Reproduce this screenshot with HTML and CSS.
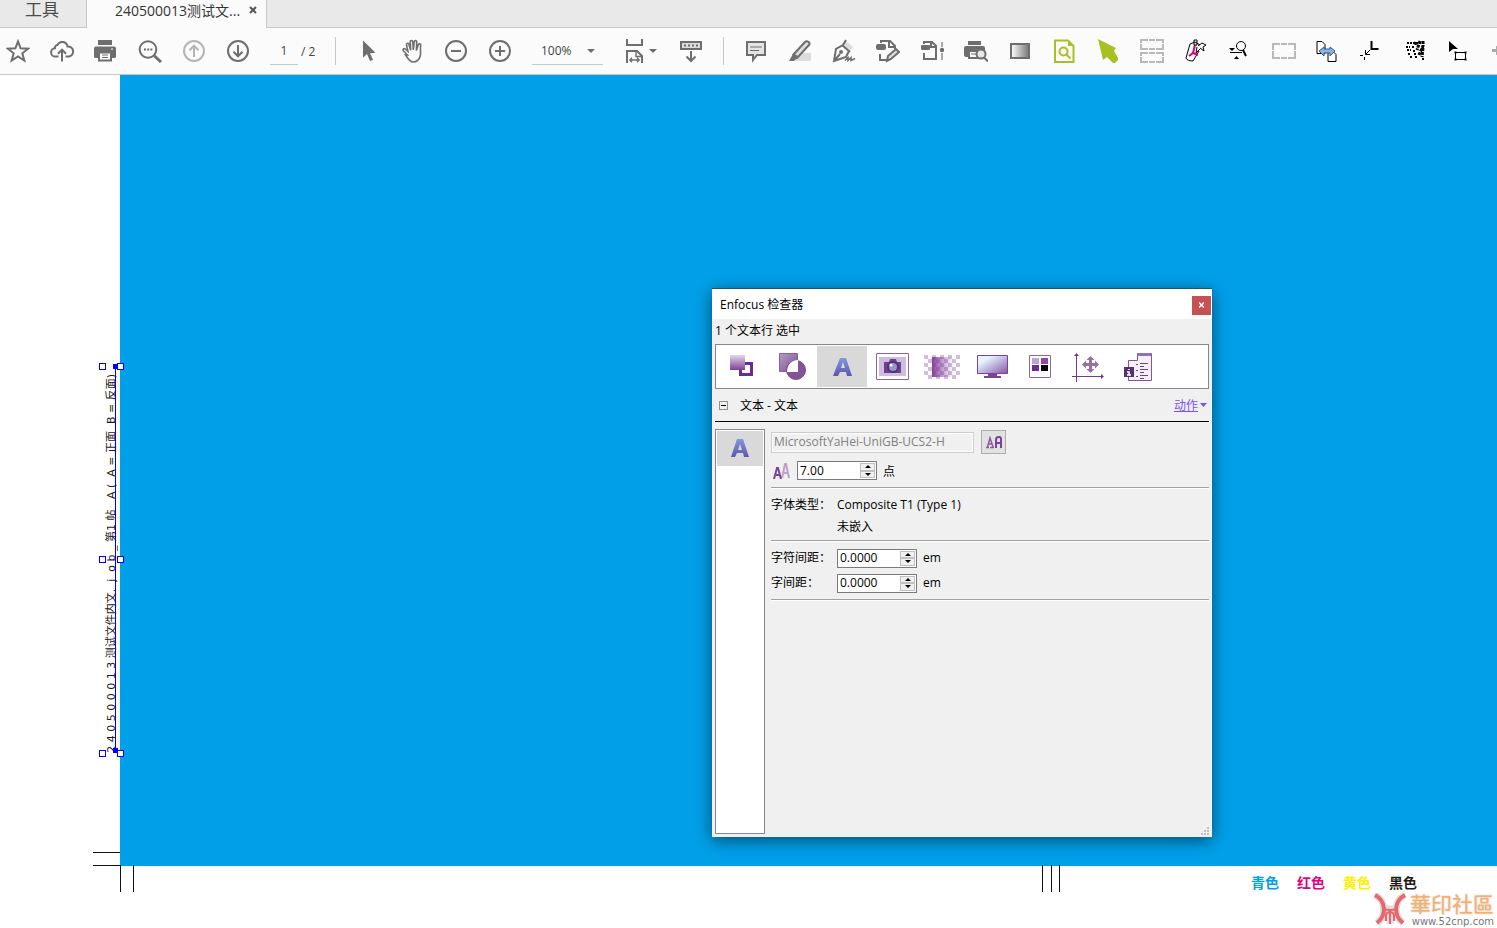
FILE: index.html
```html
<!DOCTYPE html>
<html lang="zh-CN">
<head>
    <meta charset="UTF-8">
    <meta name="viewport" content="width=device-width, initial-scale=1.0">
    <title>240500013测试文件内文</title>
    <link rel="stylesheet" href="styles.css">
</head>
<body>
    <!-- shared gradients -->
    <svg class="defs" width="0" height="0" aria-hidden="true">
        <defs>
            <linearGradient id="fade-v" x1="0" y1="0" x2="0" y2="1"><stop offset="0" stop-color="#e4d8ea"/><stop offset="1" stop-color="#7d3f98"/></linearGradient>
            <linearGradient id="fade-d" x1="0" y1="0" x2="1" y2="1"><stop offset="0" stop-color="#b79cc4"/><stop offset="1" stop-color="#7b4a92"/></linearGradient>
            <linearGradient id="fade-h" x1="0" y1="0" x2="1" y2="0"><stop offset="0" stop-color="#8540a0"/><stop offset="1" stop-color="#8540a0" stop-opacity="0"/></linearGradient>
            <linearGradient id="letter" x1="0" y1="0" x2="0" y2="1"><stop offset="0" stop-color="#7f9bd8"/><stop offset="1" stop-color="#5f55ae"/></linearGradient>
            <linearGradient id="screen" x1="0" y1="0" x2="1" y2="1"><stop offset="0.25" stop-color="#e4f3ff"/><stop offset="1" stop-color="#8552a5"/></linearGradient>
            <linearGradient id="grey-h" x1="0" y1="0" x2="1" y2="0"><stop offset="0.1" stop-color="#f2f2f2"/><stop offset="1" stop-color="#777"/></linearGradient>
        </defs>
    </svg>

    <nav class="tabs">
        <a href="#" class="tab">工具</a>
        <div class="tab tab-active">
            <span>240500013测试文...</span>
            <button class="tab-close" aria-label="关闭标签"><svg width="8" height="8" viewBox="0 0 8 8"><path d="M1 1l6 6M7 1L1 7" stroke="#555" stroke-width="2"/></svg></button>
        </div>
    </nav>

    <div class="toolbar">
        <div class="group">
            <button class="tool" aria-label="收藏"><svg viewBox="0 0 24 24"><path d="M12 2.4l2.6 6.9 7.6.4-5.9 4.6 2 7.2-6.3-4.1-6.3 4.1 2-7.2-5.9-4.6 7.6-.4z"/></svg></button>
            <button class="tool" aria-label="上传"><svg viewBox="0 0 24 24"><path d="M8.5 17.500H5.500a4 4 0 0 1-.6-8.200 3 3 0 0 1 2.600-3.400A5.300 5.300 0 0 1 17.500 7.500a5 5 0 0 1 1.300 10H15.500M12 22.500V11M8 14.700l4-4 4 4"/></svg></button>
            <button class="tool" aria-label="打印"><svg viewBox="1 0 24 24"><path class="solid" d="M5 1h14v5H5zM3 7.500h18a2 2 0 0 1 2 2v8a1.500 1.500 0 0 1-1.500 1.500H2.500A1.500 1.500 0 0 1 1 17.500v-8a2 2 0 0 1 2-2z"/><path d="M6 13.500h12v8H6z" fill="#fbfbfb"/><path d="M9 16h6M9 18.500h6" stroke-width="1"/><path d="M18 10h2" stroke="#fff" stroke-width="1"/></svg></button>
            <button class="tool" aria-label="查找"><svg viewBox="0 0 24 24"><circle cx="10" cy="10.500" r="8.300"/><path d="M16 16.500l7 6.500" stroke-width="3"/><path d="M6 10.500h2M9.200 10.500h2M12.400 10.500h2"/></svg></button>
            <button class="tool" aria-label="上一页" disabled><svg viewBox="0 0 24 24"><circle cx="12" cy="12" r="10"/><path d="M12 18V7M7.500 11.200L12 6.700l4.500 4.500"/></svg></button>
            <button class="tool" aria-label="下一页"><svg viewBox="0 0 24 24"><circle cx="12" cy="12" r="10"/><path d="M12 6v11M7.500 12.800l4.500 4.500 4.500-4.500"/></svg></button>
        </div>
        <div class="pager">
            <input type="text" value="1" aria-label="页码">
            <span>/ 2</span>
        </div>
        <div class="separator"></div>
        <div class="group">
            <button class="tool" aria-label="选择"><svg viewBox="-1 0 24 24"><path class="solid" d="M6 1.500v17.300l4-3.700 3 7 3-1.300-3-6.600 5.500-.5z"/></svg></button>
            <button class="tool" aria-label="手形"><svg viewBox="1 0 24 24"><path stroke-width="1.600" d="M6.500 16L2.300 11.800c-1-1.500.8-2.800 2-1.800l2.600 2.300L5.500 6c-.4-2 1.900-2.400 2.400-.7l1.800 6L9.200 3c0-2 2.500-2 2.600 0l.5 8 .9-8.300c.3-1.700 2.600-1.500 2.500.3l-.3 8.500 1.800-5.800c.5-1.700 2.700-1 2.500.6-.8 3.700.5 6.800-.5 10.700-1 4-3 6-7.200 6-3.500 0-4.500-3-7.500-7z" transform="translate(2 0)"/></svg></button>
            <button class="tool" aria-label="缩小"><svg viewBox="0 0 24 24"><circle cx="12" cy="12" r="10"/><path d="M7 12h10"/></svg></button>
            <button class="tool" aria-label="放大"><svg viewBox="0 0 24 24"><circle cx="12" cy="12" r="10"/><path d="M7 12h10M12 7v10"/></svg></button>
        </div>
        <div class="zoom">
            <select aria-label="缩放"><option>100%</option></select>
            <svg class="caret" width="8" height="4" viewBox="0 0 8 4"><path d="M0 0h8L4 4z"/></svg>
        </div>
        <button class="tool tool-menu" aria-label="适合宽度">
            <svg viewBox="0 0 24 24"><path d="M4 0v6h15V0M4 24V12h10l5 5v7"/><path d="M13 12v5.500h6M7 21h9M9 18.800L6.800 21 9 23.200M14 18.800l2.200 2.200-2.200 2.200" stroke-width="1.400"/></svg>
            <svg class="caret" viewBox="0 0 8 4"><path d="M0 0h8L4 4z"/></svg>
        </button>
        <button class="tool tool-scroll" aria-label="滚动"><svg viewBox="0 0 24 24"><path d="M2 3h20v7H2z" fill="#ddd"/><path d="M5 6.500h14" stroke-dasharray="2 2"/><path d="M12 12v10M7.500 17.500l4.500 4.500 4.500-4.500"/></svg></button>
        <div class="separator"></div>
        <div class="group">
            <button class="tool" aria-label="注释"><svg viewBox="0 0 24 24"><path d="M3 3h18v13h-8l-4 5v-5H3z" fill="#e4e4e4"/><path d="M6 8h12M6 11.500h9" stroke-width="1.200"/></svg></button>
            <button class="tool" aria-label="高亮"><svg viewBox="0 0 24 24"><path class="pale" d="M10 18l5-4h8v8H7z"/><path d="M5.500 15.500L17 3c1.500-1.500 5-.5 4.500 2.500L10 18z" fill="#ddd"/><path class="solid" d="M5 15l5.500 4.500-3 1L6 22H1z"/></svg></button>
            <button class="tool" aria-label="签名"><svg viewBox="0 0 24 24"><path class="pale" d="M14 2l7 6-3 4-7-6z"/><path d="M14 1l-3 5-7 4-2 12 12-4 3-6M10 6l8 7M2 22l6-7"/><circle class="solid" cx="9" cy="13" r="2"/><path d="M13 21.500l3-3v3l3-3v3l4-2" stroke-width="1.500"/></svg></button>
            <button class="tool" aria-label="编辑"><svg viewBox="0 0 24 24"><path d="M5 4V2h9l5 5v3M4 15v6h7M13 2v6h6"/><rect class="solid" x="0" y="5" width="10" height="6" rx="2"/><path d="M11 22l1-5 8-7 3 3-8 7z" fill="#ddd"/></svg></button>
            <button class="tool" aria-label="整理页面"><svg viewBox="0 0 24 24"><path d="M4 5V3h8l4 4v13H4v-6M11 3v5h5"/><rect class="solid" x="1" y="6" width="9" height="5" rx="1"/><path d="M22 3v5M22 14v7" stroke="#aaa"/><circle class="solid" cx="22" cy="11" r="2.200"/></svg></button>
            <button class="tool" aria-label="印前预览"><svg viewBox="0 0 24 24"><path class="solid" d="M4 2h13v4H4zM2 7h17a2 2 0 0 1 2 2v3h-6l-4 6H2a2 2 0 0 1-2-2V9a2 2 0 0 1 2-2z"/><path d="M5 12h11v7H5z" fill="#fbfbfb"/><path d="M7 15h5" stroke-width="1"/><circle cx="17" cy="15" r="4.500" fill="#e8e8e8"/><path d="M20 18.500l4 4"/></svg></button>
            <button class="tool" aria-label="输出预览"><svg viewBox="0 0 24 24"><path d="M3 5h18v14H3z" fill="url(#grey-h)"/></svg></button>
            <button class="tool green" aria-label="预检"><svg viewBox="0 0 24 24"><path d="M3 1.500h13l5.500 5.500v16H3z"/><path class="solid" d="M16 1l6 6h-6z"/><circle cx="11.500" cy="12.500" r="4"/><path d="M14.500 15.500l4 4"/></svg></button>
            <button class="tool green" aria-label="对象选择"><svg viewBox="0 0 24 24"><path class="solid" d="M2 0l18 9-2 3 4 7v2l-3 3h-2l-6-6-4 3z"/></svg></button>
            <button class="tool guides" aria-label="拆分"><svg viewBox="0 0 24 24"><path d="M1 4V1h7M9 1h6M16 1h7v3M23 5v5h-7M15 10H9M8 10H1V5M1 17v-3h7M9 14h6M16 14h7v3M23 18v5h-7M15 23H9M8 23H1v-5"/></svg></button>
            <button class="tool ink" aria-label="转换"><svg viewBox="0 0 24 24"><path d="M6 5l-4 14q1 3 7 3l6-10M6 5l5-2 5 3"/><path d="M11 6l-2 8-4 3M9 14l5 2" stroke="#d0007a" stroke-width="2"/><path d="M10 1h3v5h-3zM14 7l4-3 4 2-3 2 1 4-4-3M13 8l-1 6 4-4"/></svg></button>
            <button class="tool ink" aria-label="查找对象"><svg viewBox="1 0 24 24"><circle cx="14" cy="7" r="4.500"/><path d="M16 11l3 6" stroke-width="2"/><path class="solid" d="M2 9h6l-3 3zM7 20h5l-2.500-3z"/><path d="M3 13.500h12"/></svg></button>
            <button class="tool guides" aria-label="裁剪"><svg viewBox="0 0 24 24"><path d="M1 11V5h7M9 5h6M16 5h7v6M23 12v7h-7M15 19H9M8 19H1v-7"/></svg></button>
            <button class="tool ink" aria-label="交换页面"><svg viewBox="2 0 24 24"><path d="M3 2.500h5l3 3v9H3zM14 11.500h4l4 4v7h-8z" fill="#fff"/><path d="M5 12l5-4v2h6V8l5 4-5 5v-3h-6v3z" fill="#8cb4e2" stroke="#345b8c"/></svg></button>
            <button class="tool ink" aria-label="对齐"><svg viewBox="2 0 24 24"><path d="M13.500 2v8h7" stroke-width="2"/><path d="M12 11l-4 4M7.500 11v4.500H12M2 16.500h3M6.500 18v3"/></svg></button>
            <button class="tool ink" aria-label="网点"><svg viewBox="2 0 24 24"><path d="M5 4h16M4 8h4M5 11h4M6 15h3M8 18h3M10 8h3M11 12h3M12 15h2M13 18h2M20 20h2" stroke-width="2" stroke-dasharray="2 1"/><path d="M14 3l-1 3M18 2l-3 9M21 2v5l-4 9M21 9l-1 9" stroke-width="3" stroke-dasharray="3 1"/></svg></button>
            <button class="tool ink" aria-label="变换"><svg viewBox="2 0 24 24"><path class="solid" d="M3 2l9 8H7l-4 3z"/><path d="M9.500 13.500h10v7h-10z"/><path d="M8.500 13.500h2M18.500 13.500h2M8.500 20.500h2M18.500 20.500h2" stroke-width="2"/></svg></button>
            <button class="tool" aria-label="更多"><svg viewBox="0 0 24 24"><path d="M1 11h4V8h5v7H5v-3H1z" fill="#bbb" stroke="#aaa"/></svg></button>
        </div>
    </div>

    <main class="document">
        <div class="page-fill"></div>
        <footer class="color-bar">
            <span class="cyan">青色</span>
            <span class="magenta">红色</span>
            <span class="yellow">黄色</span>
            <span class="black">黑色</span>
        </footer>

        <!-- crop marks -->
        <i class="mark mark-h mark-bleed"></i>
        <i class="mark mark-h mark-trim"></i>
        <i class="mark mark-v mark-left-1"></i>
        <i class="mark mark-v mark-left-2"></i>
        <i class="mark mark-v mark-fold-1"></i>
        <i class="mark mark-v mark-fold-2"></i>
        <i class="mark mark-v mark-fold-3"></i>

        <!-- selected text line -->
        <div class="selection">
            <span class="slug">2 4 0 5 0 0 0 1 3 测试文件内文.  j  o b _ 第1 帖   A (  A = 正面  B = 反面)</span>
            <i class="baseline"></i>
            <i class="handle top left"></i>
            <i class="handle top right"></i>
            <i class="handle middle left"></i>
            <i class="handle middle right"></i>
            <i class="handle bottom left"></i>
            <i class="handle bottom right"></i>
        </div>

        <div class="watermark">
            <svg width="36" height="34" viewBox="0 0 36 34">
                <path d="M3 2C14 8 15 22 5 30M33 2C22 8 21 22 31 30M12 16h12M14 28v-8M22 20v8M18 16v15" fill="none" stroke="#ddd" stroke-width="7"/>
                <path d="M3 2C14 8 15 22 5 30M33 2C22 8 21 22 31 30" fill="none" stroke="#e6686c" stroke-width="4"/>
                <path d="M11 16q7 2 14 0M14 28v-6q1-3 4-3t4 3v6M18 16v15" fill="none" stroke="#e6686c" stroke-width="2"/>
            </svg>
            <div class="watermark-text">
                <strong>華印社區</strong>
                <span>www.52cnp.com</span>
            </div>
        </div>

        <section class="inspector" role="dialog" aria-labelledby="inspector-title">
            <header class="title-bar">
                <h1 id="inspector-title">Enfocus 检查器</h1>
                <button class="close" aria-label="关闭"><svg width="5" height="6" viewBox="0 0 5 6"><path d="M0 .5l5 5M5 .5l-5 5" stroke="#fff" stroke-width="1.500"/></svg></button>
            </header>
            <p class="status">1 个文本行 选中</p>

            <div class="categories">
                <button aria-label="填充与描边"><svg viewBox="-3 0 40 32"><path d="M15.500 12.500h11v11h-11z" fill="#fff" stroke="#6a2c91" stroke-width="3"/><path d="M5 4h15v15H5z" fill="url(#fade-v)"/></svg></button>
                <button aria-label="形状"><svg viewBox="-3 0 40 32"><path d="M4.500 2.500h18v18h-18z" fill="url(#fade-d)" stroke="#86619a"/><circle cx="21" cy="19" r="9.500" fill="#855199" stroke="#735083"/><path d="M23 9v12H12c0-7 4-12 11-12z" fill="#fff"/></svg></button>
                <button class="selected" aria-label="文本"><svg viewBox="-1 0 40 32"><path fill="url(#letter)" fill-rule="evenodd" d="M17 7h6l6 18h-5l-1-4h-6l-2 4h-5zM20 11l-2 6h4z"/></svg></button>
                <button aria-label="图像"><svg viewBox="0 0 40 32"><path d="M4.500 2.500h32v26h-32z" fill="#fff" stroke="#8c67a5"/><path d="M7 6h27v19H7z" fill="#cdbedf"/><path d="M12 11h5l1-3h6l1 3h4v11H12z" fill="#763c91"/><circle cx="21" cy="16" r="5" fill="#9697c8" stroke="#4c3472" stroke-width="2"/><circle cx="19" cy="14" r="1.500" fill="#fff"/></svg></button>
                <button aria-label="透明度"><svg viewBox="0 0 40 32"><path d="M2 6h36M2 14h36M2 22h36" stroke="#d2bddc" stroke-width="4" stroke-dasharray="4 4"/><path d="M6 10h32M6 18h32M6 26h32" stroke="#d2bddc" stroke-width="4" stroke-dasharray="4 4"/><path d="M10 6h21v20H10z" fill="url(#fade-h)"/></svg></button>
                <button aria-label="显示"><svg viewBox="0 0 40 32"><path d="M5.500 4.500h30v18h-30z" fill="url(#screen)" stroke="#7a4396"/><path d="M16 23h9v2h4v2H12v-2h4z" fill="#7a4396"/></svg></button>
                <button aria-label="分色"><svg viewBox="0 0 40 32"><path d="M7.500 4.500h21v22h-21z" fill="#fff" stroke="#8c67a5"/><path d="M10 7h7v6h-7z" fill="#bba6d0"/><path d="M19 7h7v6h-7z" fill="#9343b0"/><path d="M10 14h7v6h-7z" fill="#712b96"/><path d="M19 14h7v6h-7z" fill="#000"/></svg></button>
                <button aria-label="位置"><svg viewBox="2 0 40 32"><path d="M6.500 3v28M1 25.500h32" fill="none" stroke="#6f3a91"/><path d="M4 5l2.500-3L9 5zM31 23l3 2.500-3 2.500z" fill="#6f3a91"/><path d="M20.500 7v13M14 13.500h13" stroke="#94729f" stroke-width="3"/><path d="M20.500 5l4 4h-8zM20.500 22l4-4h-8zM12 13.500l4-4v8zM29 13.500l-4-4v8z" fill="#94729f"/></svg></button>
                <button aria-label="信息"><svg viewBox="2 0 40 32"><path d="M8.500 9.500h9v-7h14v27h-23z" fill="#f5f0f8" stroke="#8552a5"/><path d="M17 2h14v3H17z" fill="#9271b5"/><path d="M16 13.500h2M20 12.500h8M20 15.500h4M16 19.500h2M20 18.500h8M20 21.500h4M16 25.500h2M20 24.500h8M20 27.500h4" stroke="#6e438e"/><path d="M4 16h10v10H4z" fill="#57306e"/><path d="M9 18v1M7 21h2v3M7 24h4" fill="none" stroke="#fff" stroke-width="1.500"/></svg></button>
            </div>

            <div class="section-head">
                <button class="collapse" aria-label="折叠"></button>
                <h2>文本 - 文本</h2>
                <a href="#" class="actions">动作</a>
                <svg class="actions-caret" width="7" height="4" viewBox="0 0 7 4"><path d="M0 0h7L3.500 4z" fill="#7b50f5"/></svg>
            </div>

            <div class="section-body">
                <div class="side-list">
                    <button class="side-item" aria-label="文本"><svg width="24" height="24" viewBox="0 0 24 24"><path fill="url(#letter)" fill-rule="evenodd" d="M9 2h6l6 18h-5l-1-4H9l-2 4H3zM12 7l-2 6h4z"/></svg></button>
                </div>
                <form class="fields">
                    <div class="font-row">
                        <input type="text" class="font-name" value="MicrosoftYaHei-UniGB-UCS2-H" aria-label="字体" disabled>
                        <button type="button" class="font-button" aria-label="选择字体"><svg width="17" height="13" viewBox="0 0 17 13"><path d="M1 11.500h3M5 11.500h4M2.500 11l2.500-9 3 9M3 8h4" fill="none" stroke="#8b5a9e" stroke-width="1.500"/><path d="M11 12V4q0-3 2.500-3h.5q2 0 2 2v9M11 7h5" fill="none" stroke="#7a4396" stroke-width="2"/></svg></button>
                    </div>
                    <div class="size-row">
                        <svg width="18" height="17" viewBox="0 0 18 17"><path d="M9 16l3-14h1l3 14M10 11h5" fill="none" stroke="#bfa0cb" stroke-width="2"/><path d="M1 17L4 6h1l3 11M3 13h4" fill="none" stroke="#7a4396" stroke-width="2"/></svg>
                        <div class="spinner">
                            <input type="text" id="font-size" value="7.00">
                            <div class="steps"><button type="button" class="up" aria-label="增大"></button><button type="button" class="down" aria-label="减小"></button></div>
                        </div>
                        <label for="font-size">点</label>
                    </div>
                    <dl class="facts">
                        <dt>字体类型：</dt>
                        <dd>Composite T1 (Type 1)</dd>
                        <dd>未嵌入</dd>
                    </dl>
                    <div class="spacing">
                        <label for="char-space">字符间距：</label>
                        <div class="spinner">
                            <input type="text" id="char-space" value="0.0000">
                            <div class="steps"><button type="button" class="up" aria-label="增大"></button><button type="button" class="down" aria-label="减小"></button></div>
                        </div>
                        <span>em</span>
                        <label for="word-space">字间距：</label>
                        <div class="spinner">
                            <input type="text" id="word-space" value="0.0000">
                            <div class="steps"><button type="button" class="up" aria-label="增大"></button><button type="button" class="down" aria-label="减小"></button></div>
                        </div>
                        <span>em</span>
                    </div>
                </form>
            </div>
            <svg class="grip" width="8" height="8" viewBox="0 0 8 8"><path d="M6 0h2v2H6zM3 3h2v2H3zM6 3h2v2H6zM0 6h2v2H0zM3 6h2v2H3zM6 6h2v2H6z" fill="#bfbfbf"/></svg>
        </section>
    </main>
</body>
</html>
```

FILE: styles.css
```css
* {
    margin: 0;
    padding: 0;
    box-sizing: border-box;
}
body {
    display: flex;
    flex-direction: column;
    height: 100vh;
    overflow: hidden;
    font-family: "Open Sans", "Noto Sans CJK SC", sans-serif;
    font-size: 12px;
    color: #000;
    background: #fff;
}
button, input, select {
    font: inherit;
    color: inherit;
    border: none;
    background: none;
}
svg {
    display: block;
    flex: none;
}
.defs {
    position: absolute;
}

/* tabs */
.tabs {
    display: flex;
    height: 28px;
    background: #e9e9e9;
    box-shadow: inset 0 -1px #c8c8c8;
}
.tab {
    display: flex;
    align-items: center;
    padding: 0 27px 12px 25px;
    font-size: 17px;
    color: #4b4b4b;
    text-decoration: none;
    border-right: 1px solid #c8c8c8;
}
.tab-active {
    gap: 9px;
    padding: 0 9px 9px 28px;
    font-size: 14px;
    color: #333;
    background: #fbfbfb;
}
.tab-close {
    display: flex;
}

/* toolbar */
.toolbar {
    display: flex;
    align-items: center;
    height: 47px;
    overflow: hidden;
    background: #fbfbfb;
    border-bottom: 1px solid #c8c8c8;
}
.toolbar > * {
    flex: none;
}
.group {
    display: flex;
    gap: 8px;
}
.tool {
    display: flex;
    align-items: center;
    justify-content: center;
    width: 36px;
    height: 36px;
    color: #6e6e6e;
}
.tool svg {
    width: 24px;
    height: 24px;
    fill: none;
    stroke: currentColor;
    stroke-width: 2;
}
.tool .solid {
    fill: currentColor;
    stroke: none;
}
.tool .pale {
    fill: #ddd;
    stroke: none;
}
.tool:disabled {
    color: #b5b5b5;
}
.guides {
    color: #b9b9b9;
}
.green {
    color: #a9bf24;
}
.ink {
    color: #000;
}
.tool.ink svg {
    stroke-width: 1;
}
.pager {
    display: flex;
    align-items: center;
    gap: 3px;
    width: 65px;
    margin-left: 14px;
    color: #444;
}
.pager input {
    width: 28px;
    height: 28px;
    text-align: center;
    border-bottom: 1px solid #c8c8c8;
}
.separator {
    width: 1px;
    height: 28px;
    margin-right: 14px;
    background: #c8c8c8;
}
.zoom {
    display: flex;
    align-items: center;
    width: 71px;
    height: 28px;
    margin-left: 14px;
    padding-right: 8px;
    color: #444;
    border-bottom: 1px solid #c8c8c8;
}
.zoom select {
    flex: 1;
    padding-left: 9px;
    appearance: none;
}
.caret path {
    fill: #6e6e6e;
    stroke: none;
}
.tool-menu {
    gap: 2px;
    width: 44px;
    margin: 0 11px 0 15px;
}
.tool-menu .caret {
    width: 8px;
    height: 4px;
}
.tool-scroll {
    margin-right: 14px;
}

/* document */
.document {
    position: relative;
    flex: 1;
    display: grid;
    grid-template-columns: 120px 1fr;
    grid-template-rows: 1fr 62px;
    min-height: 0;
}
.page-fill {
    grid-column: 2;
    background: #00a0e9;
}
.color-bar {
    grid-column: 2;
    display: flex;
    justify-content: flex-end;
    gap: 18px;
    padding: 7px 80px 0 0;
    font-family: "Noto Sans CJK SC", sans-serif;
    font-size: 14px;
    font-weight: 700;
    line-height: 18px;
}
.cyan { color: #00a0e9; }
.magenta { color: #e4007f; }
.yellow { color: #fff100; }
.black { color: #231815; }

.mark {
    position: absolute;
    background: #111;
}
.mark-h {
    left: 93px;
    width: 27px;
    height: 1px;
}
.mark-v {
    bottom: 36px;
    width: 1px;
    height: 27px;
}
.mark-bleed { bottom: 75px; }
.mark-trim { bottom: 62px; }
.mark-left-1 { left: 120px; }
.mark-left-2 { left: 133px; }
.mark-fold-1 { left: 1042px; }
.mark-fold-2 { left: 1051px; }
.mark-fold-3 { left: 1059px; }

.selection {
    position: absolute;
    left: 102px;
    top: 291px;
    width: 19px;
    height: 387px;
}
.slug {
    position: absolute;
    right: 2px;
    bottom: 0;
    font-family: "DejaVu Sans", "Noto Sans CJK SC", sans-serif;
    font-size: 11px;
    line-height: 14px;
    color: #231815;
    white-space: pre;
    writing-mode: vertical-rl;
    text-orientation: sideways;
    transform: rotate(180deg);
}
.baseline {
    position: absolute;
    left: 13px;
    top: 0;
    bottom: 0;
    width: 1px;
    background: #00f;
}
.baseline::before,
.baseline::after {
    content: '';
    position: absolute;
    left: -2px;
    width: 5px;
    height: 5px;
    background: #00f;
}
.baseline::before { top: -2px; }
.baseline::after { bottom: 0; }
.handle {
    position: absolute;
    width: 7px;
    height: 7px;
    background: #fff;
    border: 1px solid #00f;
}
.top { top: -3px; }
.middle { top: 190px; }
.bottom { bottom: -4px; }
.left { left: -3px; }
.right { right: -3px; }

.watermark {
    position: absolute;
    right: 3px;
    bottom: 0;
    display: flex;
    align-items: center;
    gap: 2px;
}
.watermark-text {
    display: flex;
    flex-direction: column;
    align-items: flex-end;
}
.watermark strong {
    font-family: "Noto Sans CJK TC", sans-serif;
    font-size: 21px;
    font-weight: 400;
    line-height: 24px;
    color: #f8b068;
    text-shadow: 0 0 2px #bbb;
}
.watermark-text span {
    font-family: "DejaVu Sans", sans-serif;
    font-size: 10px;
    line-height: 13px;
    color: #777;
}

/* inspector window */
.inspector {
    position: absolute;
    left: 712px;
    top: 214px;
    display: flex;
    flex-direction: column;
    width: 500px;
    height: 548px;
    background: #f0f0f0;
    box-shadow: 0 -1px #17597d, 0 3px 16px rgba(0, 0, 0, 0.55);
}
.title-bar {
    display: flex;
    align-items: center;
    justify-content: space-between;
    height: 30px;
    padding: 0 1px 0 8px;
    background: #fff;
}
h1, h2 {
    font-size: 12px;
    font-weight: 400;
}
.close {
    display: flex;
    align-items: center;
    justify-content: center;
    width: 19px;
    height: 19px;
    margin-top: 2px;
    background: #c75050;
}
.status {
    height: 25px;
    padding-left: 3px;
    line-height: 24px;
}
.categories {
    display: flex;
    height: 45px;
    margin: 0 3px;
    padding: 1px;
    background: #fff;
    border: 1px solid #828790;
}
.categories button {
    display: flex;
    align-items: center;
    justify-content: center;
    width: 50px;
}
.categories svg {
    width: 40px;
    height: 32px;
}
.categories .selected,
.side-item {
    background: #d9d9d9;
}
.section-head {
    display: flex;
    align-items: center;
    height: 33px;
    margin: 0 3px;
    padding: 0 2px 0 4px;
    border-bottom: 1px solid #000;
}
.collapse {
    display: flex;
    align-items: center;
    justify-content: center;
    width: 9px;
    height: 9px;
    margin-right: 12px;
    border: 1px solid #919191;
}
.collapse::before {
    content: '';
    width: 5px;
    height: 1px;
    background: #000;
}
.actions {
    margin-left: auto;
    color: #7b50f5;
}
.actions-caret {
    margin-left: 2px;
}
.section-body {
    display: flex;
    flex: 1;
    gap: 6px;
    padding: 7px 3px 3px;
}
.side-list {
    width: 50px;
    padding: 1px;
    background: #fff;
    border: 1px solid #828790;
}
.side-item {
    display: flex;
    align-items: center;
    justify-content: center;
    width: 100%;
    height: 35px;
}
.fields {
    flex: 1;
}
.font-row {
    display: flex;
    align-items: center;
    gap: 7px;
    padding-top: 1px;
}
.font-name {
    width: 203px;
    height: 21px;
    padding: 0 2px 2px;
    color: #808080;
    border: 1px solid #ccc;
    box-shadow: inset 0 0 0 1px #fff;
}
.font-button {
    display: flex;
    align-items: center;
    justify-content: center;
    width: 25px;
    height: 24px;
    background: #e1e1e1;
    border: 1px solid #adadad;
}
.size-row {
    display: flex;
    align-items: center;
    gap: 6px;
    height: 34px;
    padding-left: 2px;
    border-bottom: 1px solid #a0a0a0;
    box-shadow: 0 1px #fff;
}
.spinner {
    display: flex;
    width: 80px;
    height: 19px;
    background: #fff;
    border: 1px solid #7a7a7a;
}
.spinner input {
    flex: 1;
    min-width: 0;
    padding-left: 2px;
}
.steps {
    display: flex;
    flex-direction: column;
    width: 15px;
    margin: 1px;
}
.steps button {
    display: flex;
    align-items: center;
    justify-content: center;
    flex: 1;
    background: #f0f0f0;
    border: 1px solid #c0c0c0;
}
.steps button::before {
    content: '';
    border: 3px solid transparent;
}
.steps .up::before {
    border-top: none;
    border-bottom-color: #000;
}
.steps .down::before {
    border-bottom: none;
    border-top-color: #000;
}
.facts,
.spacing {
    display: grid;
    grid-template-columns: 66px 1fr;
    border-bottom: 1px solid #a0a0a0;
    box-shadow: 0 1px #fff;
}
.facts {
    padding: 6px 0 2px;
    line-height: 22px;
}
.facts dd {
    grid-column: 2;
}
.spacing {
    grid-template-columns: 66px 80px 1fr;
    align-items: center;
    row-gap: 1px;
    padding: 5px 0 4px;
    line-height: 24px;
}
.spacing span {
    padding-left: 6px;
}
.grip {
    position: absolute;
    right: 3px;
    bottom: 2px;
}
```
